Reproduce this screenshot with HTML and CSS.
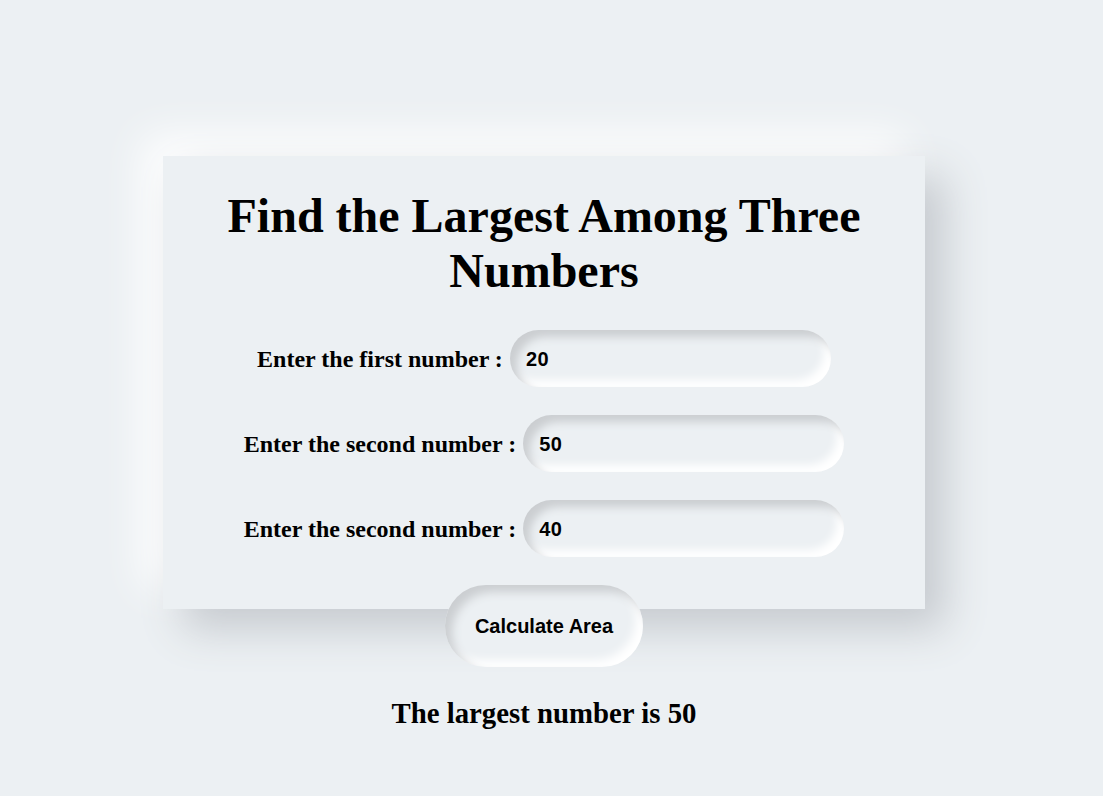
FILE: index.html
```html
<!DOCTYPE html>
<html>
<head>
<meta charset="utf-8">
<title>Find the Largest Among Three Numbers</title>
<link rel="stylesheet" href="styles.css">
</head>
<body>
<div class="card">
  <h1 class="title">Find the Largest Among Three Numbers</h1>
  <div class="row">
    <label class="label">Enter the first number :</label>
    <input class="field" type="text" value="20">
  </div>
  <div class="row">
    <label class="label">Enter the second number :</label>
    <input class="field" type="text" value="50">
  </div>
  <div class="row">
    <label class="label">Enter the second number :</label>
    <input class="field" type="text" value="40">
  </div>
  <div class="actions">
    <button class="btn" type="button">Calculate Area</button>
  </div>
  <p class="result">The largest number is 50</p>
</div>
</body>
</html>
```

FILE: styles.css
```css
html, body {
  margin: 0;
  padding: 0;
  background: #ecf0f3;
  font-family: "Liberation Serif", "Times New Roman", serif;
  color: #000;
}

body {
  padding-top: 156px;
  padding-left: 163px;
  min-height: 796px;
  box-sizing: border-box;
}

.card {
  width: 762px;
  height: 453px;
  background: #ecf0f3;
  box-shadow: 20px 20px 40px #c6cacf, -20px -20px 40px #ffffff;
  text-align: center;
}

.title {
  margin: 0;
  padding-top: 32px;
  margin-bottom: 32px;
  font-size: 48px;
  font-weight: bold;
  line-height: normal;
  padding-left: 60px;
  padding-right: 60px;
}

.row {
  display: flex;
  justify-content: center;
  align-items: center;
  gap: 7px;
  margin-bottom: 28px;
}

.label {
  font-size: 24px;
  font-weight: bold;
  padding-top: 2px;
}

.field {
  width: 321px;
  height: 57px;
  box-sizing: border-box;
  border: none;
  outline: none;
  border-radius: 30px;
  background: #ecf0f3;
  padding: 2px 15px 0 16px;
  font-family: "Liberation Sans", Arial, sans-serif;
  font-size: 20px;
  font-weight: bold;
  letter-spacing: 0.5px;
  color: #000;
  box-shadow: inset 7px 7px 8px #cbced1, inset -7px -7px 8px #ffffff;
}

.actions {
  display: flex;
  justify-content: center;
}

.btn {
  width: 198px;
  height: 82px;
  border: none;
  outline: none;
  border-radius: 41px;
  background: #ecf0f3;
  font-family: "Liberation Sans", Arial, sans-serif;
  font-size: 20px;
  font-weight: bold;
  color: #000;
  box-shadow: inset 7px 7px 10px #cbced1, inset -7px -7px 10px #ffffff;
  padding: 0;
}

.result {
  margin: 30px 0 0;
  font-size: 28.8px;
  font-weight: bold;
  line-height: normal;
}
```
